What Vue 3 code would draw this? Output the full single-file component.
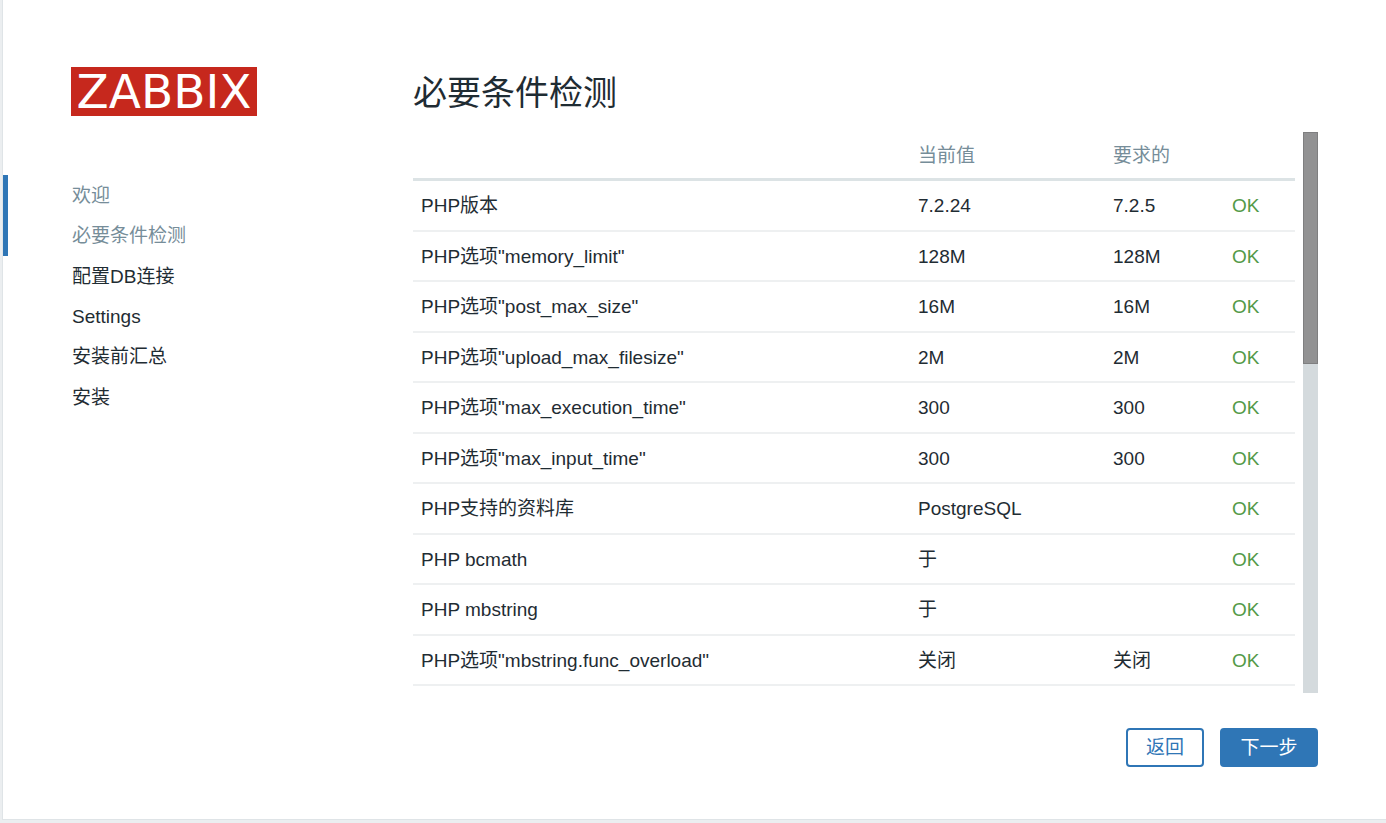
<script setup>
const steps = [
  { label: '欢迎', done: true },
  { label: '必要条件检测', done: true },
  { label: '配置DB连接', done: false },
  { label: 'Settings', done: false },
  { label: '安装前汇总', done: false },
  { label: '安装', done: false },
]

const checks = [
  { name: 'PHP版本', current: '7.2.24', required: '7.2.5' },
  { name: 'PHP选项"memory_limit"', current: '128M', required: '128M' },
  { name: 'PHP选项"post_max_size"', current: '16M', required: '16M' },
  { name: 'PHP选项"upload_max_filesize"', current: '2M', required: '2M' },
  { name: 'PHP选项"max_execution_time"', current: '300', required: '300' },
  { name: 'PHP选项"max_input_time"', current: '300', required: '300' },
  { name: 'PHP支持的资料库', current: 'PostgreSQL', required: '' },
  { name: 'PHP bcmath', current: '于', required: '' },
  { name: 'PHP mbstring', current: '于', required: '' },
  { name: 'PHP选项"mbstring.func_overload"', current: '关闭', required: '关闭' },
]
</script>

<template>
  <div class="setup">
    <aside class="side">
      <div class="logo">ZABBIX</div>
      <ul class="steps">
        <li v-for="step in steps" :key="step.label" :class="{ done: step.done }">{{ step.label }}</li>
      </ul>
    </aside>
    <main class="main">
      <h1>必要条件检测</h1>
      <div class="scroll">
        <table>
          <colgroup>
            <col />
            <col class="col-current" />
            <col class="col-required" />
            <col class="col-status" />
          </colgroup>
          <thead>
            <tr>
              <th></th>
              <th>当前值</th>
              <th>要求的</th>
              <th></th>
            </tr>
          </thead>
          <tbody>
            <tr v-for="check in checks" :key="check.name">
              <td>{{ check.name }}</td>
              <td>{{ check.current }}</td>
              <td>{{ check.required }}</td>
              <td class="ok">OK</td>
            </tr>
          </tbody>
        </table>
        <div class="track"><div class="thumb"></div></div>
      </div>
      <div class="actions">
        <button type="button" class="back">返回</button>
        <button type="button" class="next">下一步</button>
      </div>
    </main>
  </div>
</template>

<style>
body {
  background: #ebeef0;
}
</style>

<style scoped>
.setup {
  box-sizing: border-box;
  display: flex;
  margin: 0 0 3px 2px;
  padding: 67px 68px 52px 0;
  background: #fff;
  border-left: 1px solid #dfe4e7;
  border-bottom: 1px solid #dfe4e7;
  color: #1f2c33;
  font-family: "Liberation Sans", "Noto Sans CJK SC", sans-serif;
  font-size: 19px;
  line-height: 28px;
}

.side {
  flex: 0 0 410px;
}

.logo {
  box-sizing: border-box;
  width: 186px;
  height: 49px;
  margin-left: 68px;
  padding-top: 1px;
  background: #c6281d;
  color: #fff;
  font-family: "DejaVu Sans", sans-serif;
  font-size: 47px;
  line-height: 48px;
  text-align: center;
}

.steps {
  display: flex;
  flex-direction: column;
  height: 242px;
  margin: 59px 0 0;
  padding: 0;
  list-style: none;
}

.steps li {
  flex: 1;
  display: flex;
  align-items: center;
  padding: 2px 0 0 64px;
  border-left: 5px solid transparent;
}

.steps .done {
  border-left-color: #2f76b6;
  color: #768d99;
}

.main {
  flex: 1;
  min-width: 0;
}

h1 {
  margin: 0 0 15px;
  padding-top: 2px;
  font-size: 34px;
  font-weight: 400;
  line-height: 48px;
}

.scroll {
  display: flex;
  align-items: flex-start;
  gap: 8px;
}

table {
  flex: 1;
  height: 554px;
  table-layout: fixed;
  border-collapse: separate;
  border-spacing: 0;
}

.col-current {
  width: 195px;
}

.col-required {
  width: 119px;
}

.col-status {
  width: 71px;
}

th,
td {
  padding: 2px 8px 0;
  text-align: left;
  font-weight: 400;
  white-space: nowrap;
}

th {
  height: 44px;
  border-bottom: 3px solid #dce3e5;
  color: #768d99;
}

td {
  border-bottom: 2px solid #eef0f1;
}

.ok {
  color: #539a48;
}

.track {
  flex: 0 0 15px;
  height: 561px;
  background: #d4dadd;
}

.thumb {
  box-sizing: border-box;
  height: 232px;
  background: #929293;
  border: 1px solid #7f7f80;
}

.actions {
  display: flex;
  justify-content: flex-end;
  gap: 16px;
  margin-top: 35px;
}

button {
  height: 39px;
  padding: 1px 18px 0;
  border: 2px solid #2f76b6;
  border-radius: 4px;
  font: inherit;
}

.back {
  background: #fff;
  color: #2f76b6;
}

.next {
  min-width: 98px;
  background: #2f76b6;
  color: #fff;
}
</style>
